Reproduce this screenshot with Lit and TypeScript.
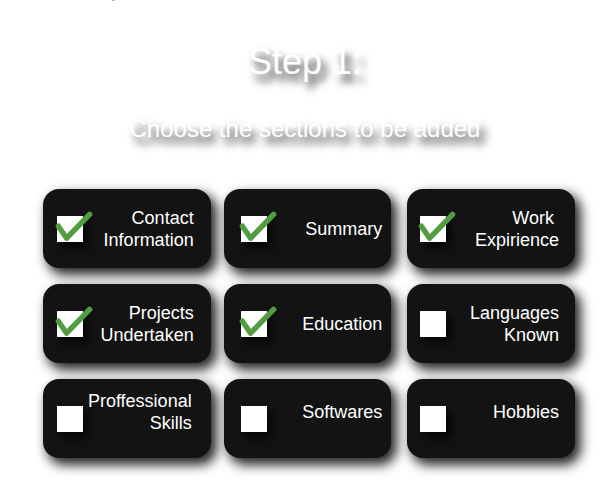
import { LitElement, html, css, nothing } from "lit";
import { customElement, property, state } from "lit/decorators.js";

interface Section {
  id: string;
  lines: string[];
  checked: boolean;
}

@customElement("section-card")
class SectionCard extends LitElement {
  @property({ attribute: false }) section!: Section;

  static styles = css`
    :host {
      display: block;
    }
    .card {
      display: flex;
      align-items: center;
      justify-content: space-between;
      box-sizing: border-box;
      min-height: 79px;
      padding-left: var(--box-inset, 14px);
      border-radius: 16px;
      background: #131313;
      color: #fff;
      box-shadow: 5px 6px 12px 1px rgba(0, 0, 0, 0.85);
      font: 18px/22px "Liberation Sans", Arial, sans-serif;
      cursor: pointer;
    }
    .box {
      position: relative;
      flex: none;
      width: 26px;
      height: 26px;
    }
    input {
      display: block;
      appearance: none;
      width: 26px;
      height: 26px;
      margin: 0;
      background: #fff;
      box-shadow: 5px 6px 9px rgba(0, 0, 0, 0.75);
    }
    .tick {
      position: absolute;
      left: -2px;
      top: -5px;
      width: 38px;
      height: 34px;
      pointer-events: none;
    }
    .text {
      padding-right: var(--text-inset, 16px);
      padding-bottom: var(--text-lift, 0);
      text-align: right;
      white-space: nowrap;
    }
    .line {
      display: block;
    }
  `;

  private toggle() {
    this.dispatchEvent(new CustomEvent("toggle-section", { detail: this.section.id }));
  }

  render() {
    const { id, lines, checked } = this.section;
    return html`
      <label class="card" for=${id}>
        <span class="box">
          <input type="checkbox" id=${id} .checked=${checked} @change=${this.toggle} />
          ${checked
            ? html`<svg class="tick" viewBox="0 0 38 34" aria-hidden="true">
                <path d="M3.4 15.2 L11.6 27.2 L34.6 3.4" fill="none" stroke="#529c41"
                  stroke-width="5.4" stroke-linecap="round" stroke-linejoin="round" />
              </svg>`
            : nothing}
        </span>
        <span class="text">${lines.map((l) => html`<span class="line">${l}</span>`)}</span>
      </label>
    `;
  }
}

@customElement("app-root")
class AppRoot extends LitElement {
  @state() private sections: Section[] = [
    { id: "contact", lines: ["Contact", "Information"], checked: true },
    { id: "summary", lines: ["Summary"], checked: true },
    { id: "work", lines: ["Work\u00a0", "Expirience"], checked: true },
    { id: "projects", lines: ["Projects", "Undertaken"], checked: true },
    { id: "education", lines: ["Education"], checked: true },
    { id: "languages", lines: ["Languages", "Known"], checked: false },
    { id: "skills", lines: ["Proffessional", "Skills"], checked: false },
    { id: "softwares", lines: ["Softwares"], checked: false },
    { id: "hobbies", lines: ["Hobbies"], checked: false },
  ];

  static styles = css`
    :host {
      display: block;
      background: #fff;
      font-family: "Liberation Sans", Arial, sans-serif;
    }
    .mark {
      width: 3px;
      height: 1px;
      margin-left: 112px;
      background: #bbb;
    }
    main {
      padding: 41px 35px 32px 43px;
    }
    h1,
    h2 {
      margin: 0;
      padding-right: 8px;
      color: #fff;
      font-weight: 400;
      text-align: center;
      text-shadow: 5px 7px 9px rgba(0, 0, 0, 0.85);
    }
    h1 {
      font-size: 36px;
      line-height: 40px;
    }
    h2 {
      margin-top: 31px;
      font-size: 24px;
      line-height: 32px;
    }
    .grid {
      display: grid;
      grid-template-columns: 168fr 171fr 168fr;
      gap: 16px 13px;
      margin-top: 44px;
    }
    section-card:nth-child(3n + 1) {
      --text-inset: 17px;
    }
    section-card:nth-child(3n + 2) {
      margin-right: 3px;
      --box-inset: 17px;
      --text-inset: 9px;
    }
    section-card:nth-child(3n) {
      --box-inset: 13px;
    }
    section-card:nth-child(n + 7) {
      --text-lift: 14px;
    }
    section-card:nth-child(7) {
      --text-inset: 19px;
    }
  `;

  private toggle(e: CustomEvent<string>) {
    this.sections = this.sections.map((s) =>
      s.id === e.detail ? { ...s, checked: !s.checked } : s
    );
  }

  render() {
    return html`
      <div class="mark"></div>
      <main>
        <h1>Step 1:</h1>
        <h2>Choose the sections to be added</h2>
        <div class="grid">
          ${this.sections.map(
            (s) => html`<section-card .section=${s} @toggle-section=${this.toggle}></section-card>`
          )}
        </div>
      </main>
    `;
  }
}
